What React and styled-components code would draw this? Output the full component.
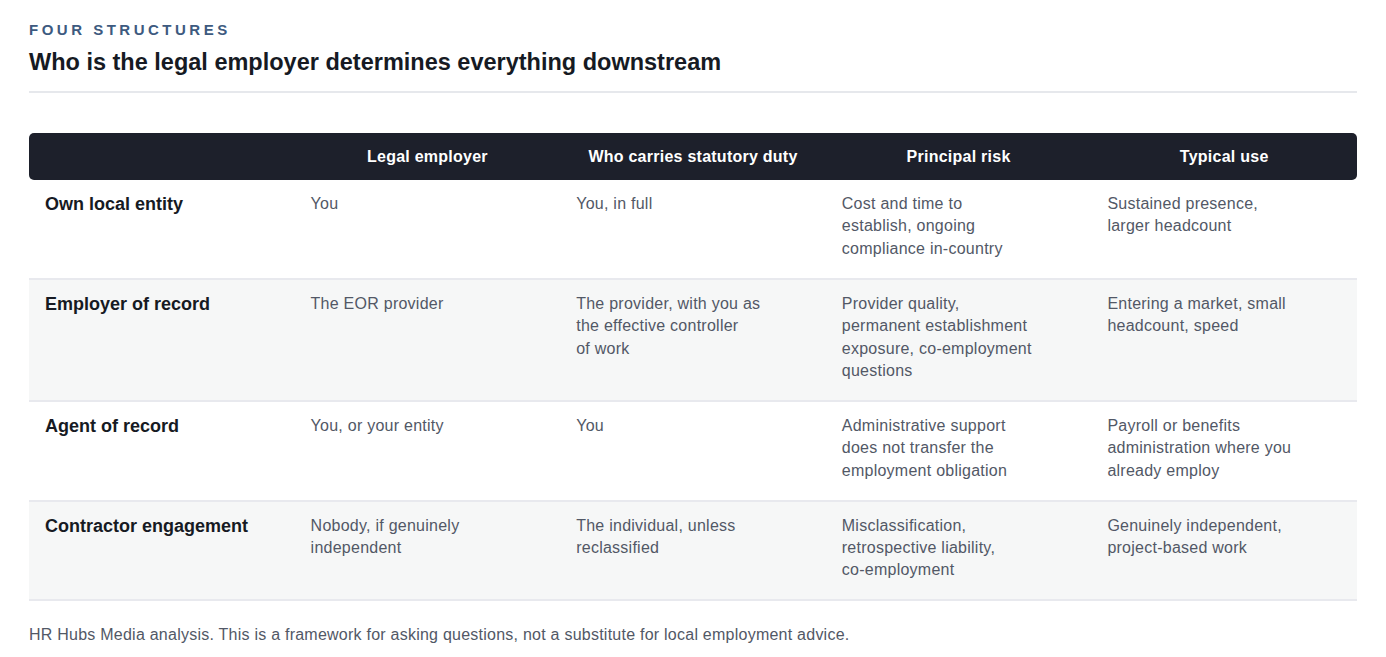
import React from "react";
import styled, { createGlobalStyle } from "styled-components";

// \u2060 keeps "co-employment" from breaking at the hyphen, \u00a0 keeps "of work" together
const rows = [
  {
    name: "Own local entity",
    cells: ["You", "You, in full", "Cost and time to establish, ongoing compliance in-country", "Sustained presence, larger headcount"],
  },
  {
    name: "Employer of record",
    cells: [
      "The EOR provider",
      "The provider, with you as the effective controller of\u00a0work",
      "Provider quality, permanent establishment exposure, co-\u2060employment questions",
      "Entering a market, small headcount, speed",
    ],
  },
  {
    name: "Agent of record",
    cells: [
      "You, or your entity",
      "You",
      "Administrative support does not transfer the employment obligation",
      "Payroll or benefits administration where you already employ",
    ],
  },
  {
    name: "Contractor engagement",
    cells: [
      "Nobody, if genuinely independent",
      "The individual, unless reclassified",
      "Misclassification, retrospective liability, co-\u2060employment",
      "Genuinely independent, project-based work",
    ],
  },
];

const headings = ["", "Legal employer", "Who carries statutory duty", "Principal risk", "Typical use"];

export default function App() {
  return (
    <StPage>
      <GlobalStyle />
      <StHeader>
        <StEyebrow>Four structures</StEyebrow>
        <StTitle>Who is the legal employer determines everything downstream</StTitle>
      </StHeader>
      <StTable>
        <thead>
          <tr>
            {headings.map((h, i) => (
              <StTh key={i}>{h}</StTh>
            ))}
          </tr>
        </thead>
        <tbody>
          {rows.map((row, i) => (
            <StRow key={row.name} $shaded={i % 2 === 1}>
              <StTd>
                <StName>{row.name}</StName>
              </StTd>
              {row.cells.map((c, j) => (
                <StTd key={j}>
                  <StText>{c}</StText>
                </StTd>
              ))}
            </StRow>
          ))}
        </tbody>
      </StTable>
      <StNote>
        HR Hubs Media analysis. This is a framework for asking questions, not a substitute for local employment advice.
      </StNote>
    </StPage>
  );
}

const GlobalStyle = createGlobalStyle`
  body {
    margin: 0;
    background: #ffffff;
    font-family: "Liberation Sans", Arial, sans-serif;
  }
`;

const StPage = styled.div`
  padding: 20px 29px 0;
`;

const StHeader = styled.div`
  padding-bottom: 14px;
  border-bottom: 2px solid #e6e8ec;
  margin-bottom: 40px;
`;

const StEyebrow = styled.div`
  font-size: 15px;
  line-height: 20px;
  font-weight: 700;
  letter-spacing: 3.5px;
  text-transform: uppercase;
  color: #3d5a80;
`;

const StTitle = styled.h1`
  margin: 7px 0 0;
  font-size: 23.5px;
  line-height: 30px;
  font-weight: 700;
  color: #161a23;
`;

const StTable = styled.table`
  width: 100%;
  table-layout: fixed;
  border-collapse: separate;
  border-spacing: 0;
`;

const StTh = styled.th`
  height: 47px;
  padding: 0 16px;
  background: #1d202b;
  color: #ffffff;
  font-size: 16px;
  font-weight: 700;
  letter-spacing: 0.25px;
  text-align: center;

  &:first-child {
    border-radius: 5px 0 0 5px;
  }
  &:last-child {
    border-radius: 0 5px 5px 0;
  }
`;

const StRow = styled.tr`
  background: ${(p) => (p.$shaded ? "#f6f7f7" : "#ffffff")};
`;

const StTd = styled.td`
  padding: 13px 16px 17.5px;
  vertical-align: top;
  border-bottom: 2px solid #e8e9ee;
`;

const StName = styled.div`
  font-size: 18px;
  line-height: 22.4px;
  font-weight: 700;
  color: #161a23;
`;

const StText = styled.div`
  max-width: 192px;
  font-size: 16px;
  line-height: 22.4px;
  letter-spacing: 0.25px;
  color: #525866;
`;

const StNote = styled.p`
  margin: 23px 0 0;
  font-size: 16px;
  line-height: 22px;
  letter-spacing: 0.24px;
  color: #525866;
`;
